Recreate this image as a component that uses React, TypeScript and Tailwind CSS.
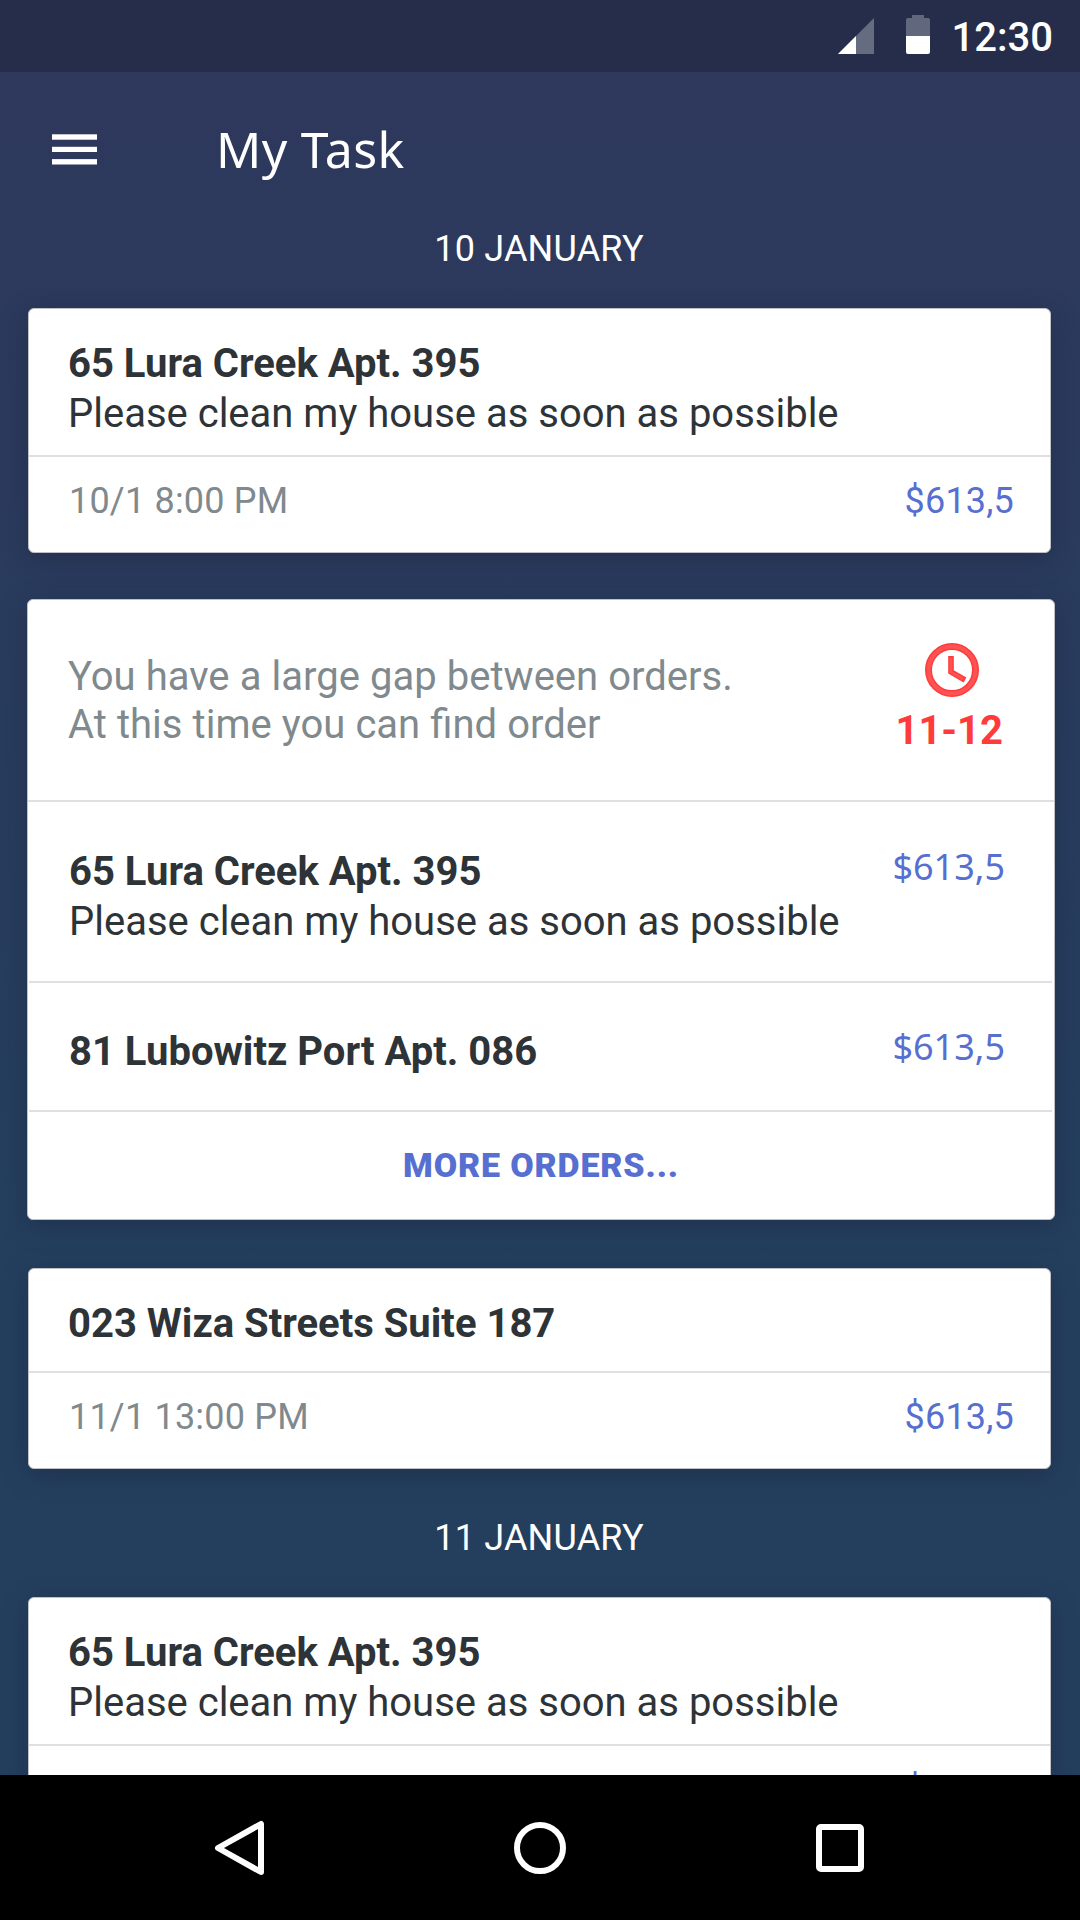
import type { ReactNode } from "react";
import { clsx } from "clsx";

type Task = {
  address: string;
  note?: string;
  date: string;
  price: string;
};

type Order = {
  address: string;
  note?: string;
  price: string;
};

const FIRST_TASK: Task = {
  address: "65 Lura Creek Apt. 395",
  note: "Please clean my house as soon as possible",
  date: "10/1 8:00 PM",
  price: "$613,5",
};

const SECOND_TASK: Task = {
  address: "023 Wiza Streets Suite 187",
  date: "11/1 13:00 PM",
  price: "$613,5",
};

const NEXT_DAY_TASK: Task = { ...FIRST_TASK, date: "11/1 8:00 PM" };

const SUGGESTED_ORDERS: Order[] = [
  {
    address: "65 Lura Creek Apt. 395",
    note: "Please clean my house as soon as possible",
    price: "$613,5",
  },
  { address: "81 Lubowitz Port Apt. 086", price: "$613,5" },
];

function StatusBar() {
  return (
    <div className="flex h-[72px] shrink-0 items-start justify-end bg-[#252d4a] pr-[27px] text-white">
      <svg className="mt-[18px] mr-8" width="36" height="36" viewBox="0 0 36 36">
        <path d="M0 36L36 0v36z" fill="#fff" fillOpacity="0.3" />
        <path d="M0 36L18 18v18z" fill="#fff" />
      </svg>
      <svg className="mt-[15px] mr-[22px]" width="24" height="39" viewBox="0 0 24 39">
        <path d="M6 0h12v3h4a2 2 0 0 1 2 2v16H0V5a2 2 0 0 1 2-2h4z" fill="#fff" fillOpacity="0.28" />
        <path d="M0 21h24v16a2 2 0 0 1-2 2H2a2 2 0 0 1-2-2z" fill="#fff" />
      </svg>
      <span className="mt-3.5 text-[40px] leading-[48px] font-medium">12:30</span>
    </div>
  );
}

function AppBar() {
  return (
    <header className="flex h-[155px] shrink-0 items-center pb-px pl-[52px] text-white">
      <svg width="45" height="31" viewBox="0 0 45 31" fill="currentColor">
        <rect y="0.3" width="45" height="5.4" />
        <rect y="12.8" width="45" height="5.2" />
        <rect y="25.1" width="45" height="5.4" />
      </svg>
      <h1 className="ml-[119px] font-['Noto_Sans',sans-serif] text-[50px] leading-none tracking-[0.3px]">
        My Task
      </h1>
    </header>
  );
}

function DateLabel({ className, children }: { className?: string; children: ReactNode }) {
  return (
    <h2
      className={clsx(
        "pr-0.5 text-center text-[36px] leading-[44px] tracking-[0.2px] text-white",
        className
      )}
    >
      {children}
    </h2>
  );
}

function Card({ className, children }: { className?: string; children: ReactNode }) {
  return (
    <section
      className={clsx(
        "rounded-md border border-[#bfc1c6] bg-white shadow-[0_6px_26px_rgba(26,33,56,0.4)]",
        className
      )}
    >
      {children}
    </section>
  );
}

function AddressBlock({ address, note }: { address: string; note?: string }) {
  return (
    <div className="text-[40px] leading-[50px] text-[#2d3337]">
      <h3 className="font-bold">{address}</h3>
      {note && <p>{note}</p>}
    </div>
  );
}

function TaskCard({ task, className }: { task: Task; className?: string }) {
  return (
    <Card className={clsx("ml-7 mr-[29px]", className)}>
      <div
        className={clsx(
          "border-b-2 border-[#e0e0e0] pt-[30px] pl-[39px]",
          task.note ? "h-[148px]" : "h-[104px]"
        )}
      >
        <AddressBlock address={task.address} note={task.note} />
      </div>
      <div className="flex h-[95px] items-center justify-between pb-[7px] pl-10 pr-9 text-[36px] leading-[42px] tracking-[0.2px]">
        <span className="text-[#80898d]">{task.date}</span>
        <span className="text-[#566fd0]">{task.price}</span>
      </div>
    </Card>
  );
}

function ClockIcon() {
  return (
    <svg width="54" height="54" viewBox="0 0 54 54" fill="none">
      <circle cx="27" cy="27" r="23.5" stroke="#ff3b3b" strokeWidth="7" />
      <circle cx="27" cy="27" r="23.5" stroke="#ff5252" strokeWidth="4" />
      <path d="M26 13v16l14 8" stroke="#ff3b3b" strokeWidth="5.6" />
      <path d="M26 15v14l12 7" stroke="#ff5252" strokeWidth="3" />
    </svg>
  );
}

function GapCard() {
  return (
    <Card className="mt-[46px] mr-[25px] ml-[27px]">
      <div className="flex h-[202px] justify-between border-b-2 border-[#e0e0e0] pl-10 pr-[51px]">
        <p className="pt-[53px] text-[40px] leading-[48px] [word-spacing:0.2px] text-[#80898d]">
          You have a large gap between orders.
          <br />
          At this time you can find order
        </p>
        <div className="flex flex-col items-end pt-[43px] text-[#ff3b3b]">
          <div className="mr-6">
            <ClockIcon />
          </div>
          <span className="mt-2.5 text-[40px] leading-[48px] font-bold">11-12</span>
        </div>
      </div>

      {SUGGESTED_ORDERS.map((order) => (
        <div
          key={order.address}
          className={clsx(
            "mr-0.5 ml-px flex justify-between border-b-2 border-[#e0e0e0] pr-[47px] pl-10",
            order.note ? "h-[181px] pt-px" : "h-[129px]"
          )}
        >
          <div className="pt-11">
            <AddressBlock address={order.address} note={order.note} />
          </div>
          <span className="pt-10 font-['Noto_Sans',sans-serif] text-[36px] leading-[48px] text-[#566fd0]">
            {order.price}
          </span>
        </div>
      ))}

      <button className="flex h-[107px] w-full items-center justify-center text-[34px] font-black tracking-[0.85px] text-[#566fd0]">
        MORE ORDERS...
      </button>
    </Card>
  );
}

function NavBar() {
  return (
    <nav className="flex h-[145px] shrink-0 items-center justify-center gap-60 bg-black">
      <svg width="60" height="60" viewBox="0 0 60 60" fill="none" stroke="#fff" strokeWidth="6" strokeLinejoin="round">
        <path d="M51 6v48L8 30z" />
      </svg>
      <svg width="60" height="60" viewBox="0 0 60 60" fill="none" stroke="#fff" strokeWidth="6">
        <circle cx="30" cy="30" r="23" />
      </svg>
      <svg width="60" height="60" viewBox="0 0 60 60" fill="none" stroke="#fff" strokeWidth="6">
        <rect x="9" y="9" width="42" height="42" rx="2" />
      </svg>
    </nav>
  );
}

export default function App() {
  return (
    <div className="flex h-[1920px] w-[1080px] flex-col overflow-hidden bg-linear-to-b from-[#2e385c] from-0% to-[#243f5e] to-65% font-[Roboto,sans-serif]">
      <StatusBar />
      <AppBar />
      <main className="min-h-0 flex-1 overflow-hidden">
        <DateLabel>10 JANUARY</DateLabel>
        <TaskCard task={FIRST_TASK} className="mt-[37px]" />
        <GapCard />
        <TaskCard task={SECOND_TASK} className="mt-12" />
        <DateLabel className="mt-[47px]">11 JANUARY</DateLabel>
        <TaskCard task={NEXT_DAY_TASK} className="mt-[37px]" />
      </main>
      <NavBar />
    </div>
  );
}
